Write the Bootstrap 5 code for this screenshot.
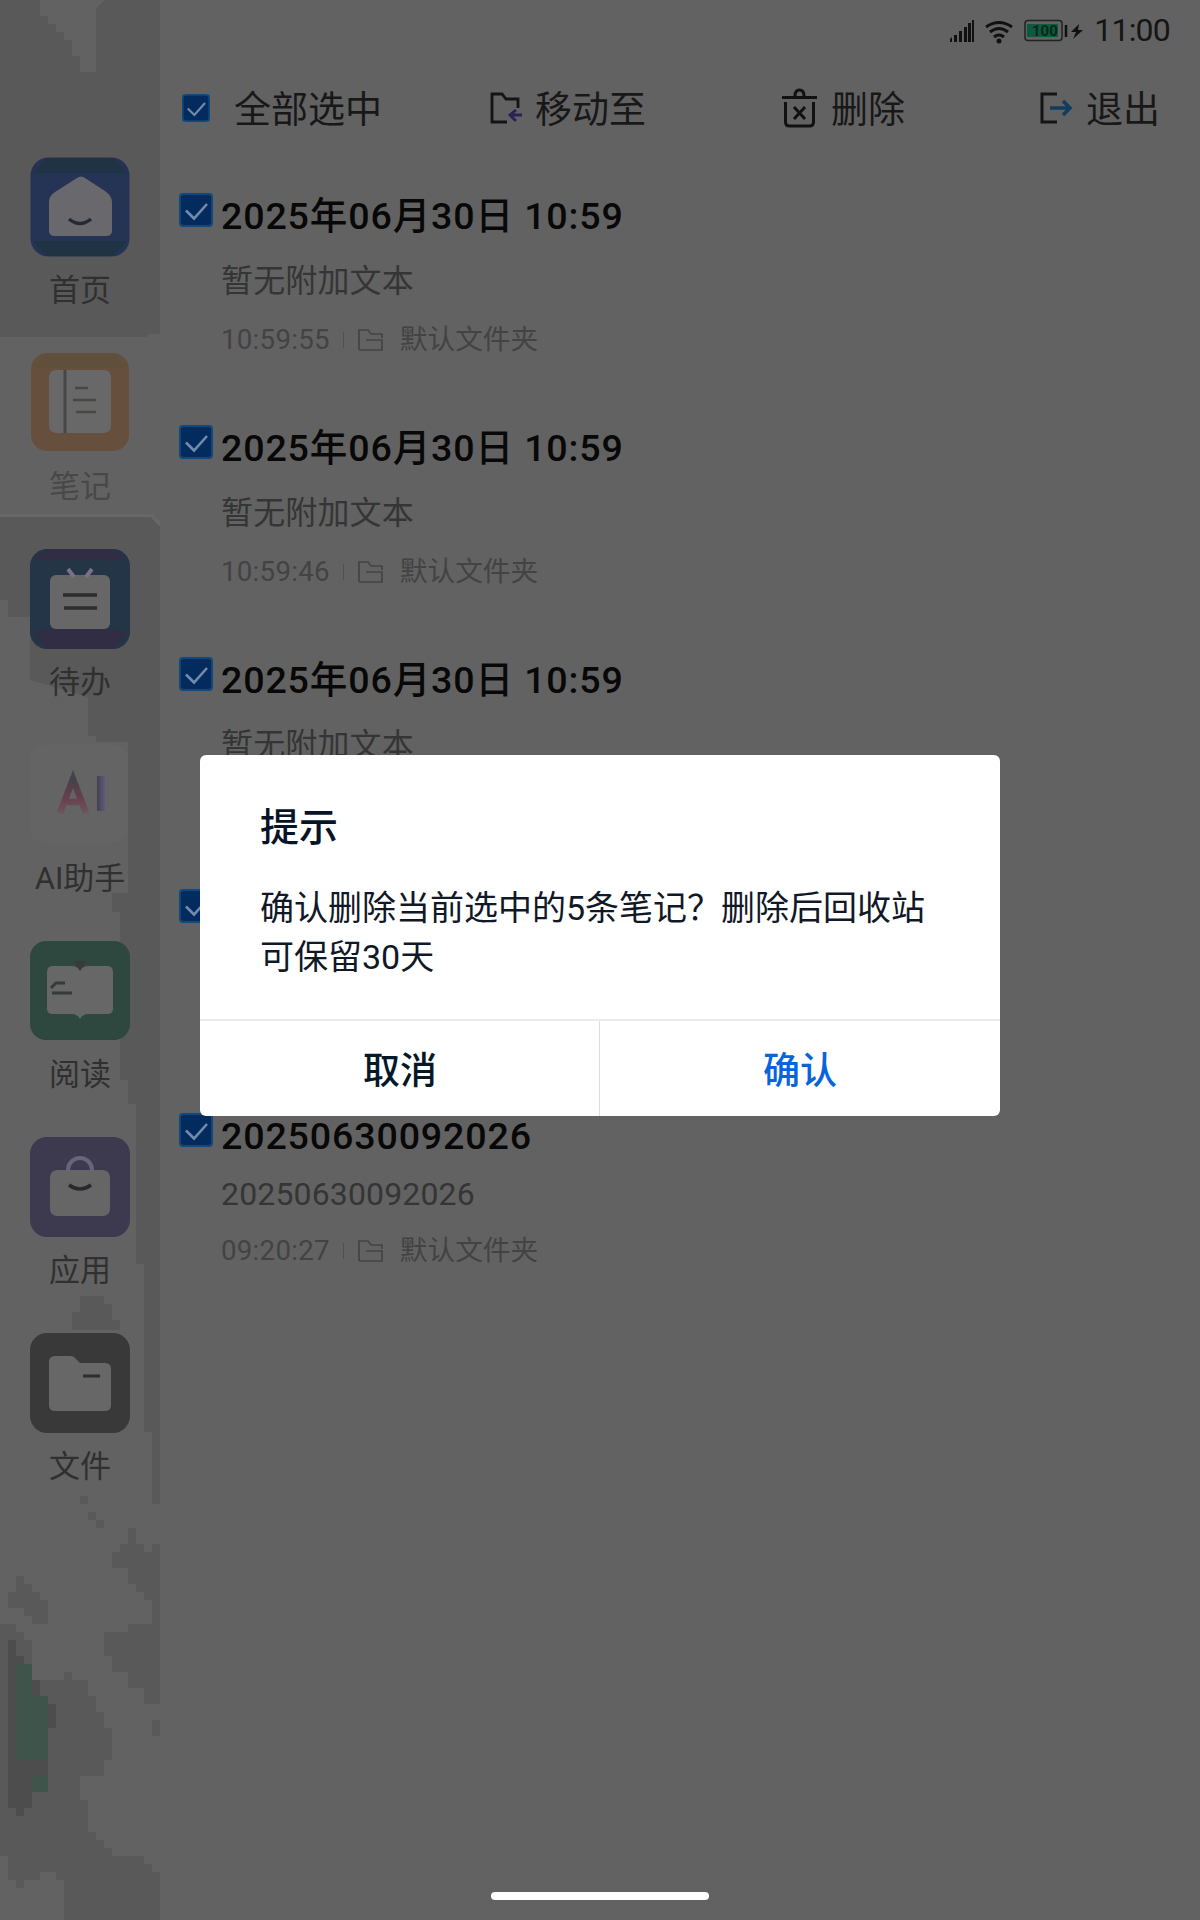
<!DOCTYPE html>
<html lang="zh-CN">
<head>
<meta charset="utf-8">
<meta name="viewport" content="width=device-width, initial-scale=1">
<title>笔记</title>
<link href="https://cdn.jsdelivr.net/npm/bootstrap@5.3.0/dist/css/bootstrap.min.css" rel="stylesheet">
<style>
body{background:#626262;font-family:Roboto,"Noto Sans CJK SC",sans-serif;color:#151515;width:1200px;height:1920px;overflow:hidden}
svg{display:block;flex:none}
.screen{width:1200px;height:1920px}
.side{width:160px;padding-top:157px;flex:none}
.side-bg{left:0;top:0;z-index:0}
.side-item{height:196px;z-index:1;font-size:31px;line-height:46px;color:#303030}
.side-item svg{margin-bottom:11px}
.side-item.current{color:#484848}
.status{height:60px;padding:0 30px 0 0;font-size:32px}
.status-icons{margin-right:10px}
.clock{letter-spacing:-.8px}
.tools{height:96px;font-size:37px;line-height:54px;color:#181818}
.tools .tool{flex:none}
.tools .tool span{padding-top:6px}
.tool-all{width:330px;padding-left:22px}
.tool-move{width:291px}
.tool-del{width:258px}
.gap-ic{margin-right:13px}
.note{height:232px;padding:33px 0 0 19px}
.notes{padding-top:4px}
.note.plain{height:224px}
.note-title{font-size:37.6px;font-weight:500;line-height:46px;color:#080808;letter-spacing:.85px;white-space:nowrap}
.note-sub{font-size:32px;line-height:44px;color:#353535;margin-top:20px;letter-spacing:.15px}
.note-meta{font-size:27.7px;line-height:38px;color:#434343;margin-top:18px}
.stamp{letter-spacing:.25px}
.note.plain .note-sub{margin-top:13px}
.note.plain .note-meta{margin-top:16px}
.note-text{margin-left:8px}
.bar{width:1px;height:16px;background:#505050;margin:0 14px 0 13px}
.layer{inset:0;padding-top:755px;z-index:5}
.dialog{width:800px;height:361px;border-radius:6px;background:#fff}
.dialog-main{height:266px;padding:46px 60px 0;border-bottom:2px solid #ebebeb}
.dialog-main h2{font-size:39px;line-height:54px;font-weight:500;color:#071326;margin:0 0 29px}
.dialog-main p{font-size:34px;line-height:49px;color:#111827;margin:0;width:690px;white-space:nowrap}
.act{font-size:37px;font-weight:500;color:#051827;border:0;background:none;padding:6px 0 0}
.act+.act{box-shadow:-1px 0 #dedede;color:#0864dc}
.home{width:218px;height:8px;border-radius:4px;background:#fff;left:491px;top:1892px}
</style>
</head>
<body>
<svg width="0" height="0" class="position-absolute">
<defs>
<symbol id="chk" viewBox="0 0 34 34"><rect width="34" height="34" rx="4" fill="#11497c"/><rect x="2" y="2" width="30" height="30" rx="3" fill="#032b5e"/><path d="M7 17.500l8 8L28 11" fill="none" stroke="#738bab" stroke-width="2.600"/></symbol>
<symbol id="fold" viewBox="0 0 26 24"><path d="M1 22V2h9l3 4h11v4M1 22h23v-6M8 12h16v4" fill="none" stroke="#444" stroke-width="1.700"/></symbol>
</defs>
</svg>
<div class="screen d-flex position-relative">
  <aside class="side position-relative">
    <svg class="side-bg position-absolute" width="160" height="1920" shape-rendering="crispEdges">
      <path fill="#595959" d="M0 0H160V334H150L146 337H0ZM0 517H152L160 526V1504H152V1432H144V1264H136V1104H128V1080H120V912H112V893H128V742H96V736H88V697L30 680V617H8V600H0Z"/>
      <path fill="#626262" d="M40 0H104L96 8V72H80V56H72V40H64V32H56V24H48V16H40Z"/>
      <path fill="#595959" d="M80 1296H104V1304H112V1320H120V1330H72V1312H80ZM80 1496h8v8h-8zM88 1512h8v8h-8zM96 1520h8v8h-8zM128 1528h8v16h8v8h8v-8h8V1624h-8v-24h-8v-8h-8v-8h-8v-16h-16v-16h8v-8h8zM16 1576h8v8h8v8h8v8h8v24H32v-8h-8v-8H8v-16h8zM128 1624h32v80h-16v-16h-16v-16h-16v-16h-8v-24h24zM152 1720h8v16h-8zM0 1624H16v8h8v8h8v40H64v-8h8v8h16v16h8v16h8v16h8v32h-8v16H80v24h8v32h8v8h8v8h8v8h32v8h8v8h8v48H64v-40H56v-8H40v8H24v8H16v-8H8v-24H0Z"/>
      <path fill="#4d4d4d" d="M8 1640h8v16h8v24h16v16h8v8h8v24h-8v48h-8v8h-8v24h-8v8h-8v-8H8z"/>
      <path fill="#3f554c" d="M16 1664h16v32h16v64H16zM32 1776h16v16H32z"/>
      <path fill="#676767" d="M0 514h152l8 8v5l-10-10H0z"/>
    </svg>
    <div class="side-item d-flex flex-column align-items-center position-relative">
      <svg width="100" height="100"><rect x=".5" y=".5" width="99" height="99" rx="18" fill="#253354"/><path d="M17 1h66l14 15H3zM3 84h94l-14 15H17z" fill="#203344"/><path d="M47 21q4-3 8 0l20 13q7 5 7 11v29q0 5-6 5H25q-6 0-6-5V45q0-6 6-10z" fill="#69686c"/><path d="M39 62q11 9 22 0" fill="none" stroke="#252b35" stroke-width="3.500"/></svg>首页</div>
    <div class="side-item current d-flex flex-column align-items-center position-relative">
      <svg width="100" height="100"><rect x="1" y="0" width="98" height="98" rx="16" fill="#66503d"/><path d="M17 0h66l15 15H2z" fill="#5f4f3b"/><rect x="19" y="17" width="62" height="63" rx="7" fill="#686868"/><path d="M35 17v63" stroke="#494744" stroke-width="3"/><path d="M45 35h13M43 47h23M46 59h20" stroke="#494744" stroke-width="2.500"/></svg>笔记</div>
    <div class="side-item d-flex flex-column align-items-center position-relative">
      <svg width="100" height="100"><rect width="100" height="100" rx="17" fill="#233547"/><path d="M17 0h66l14 11H3zM17 80h66l14 4-14 16H17l-14-16z" fill="#302d45"/><rect x="20" y="26" width="60" height="54" rx="6" fill="#676767"/><path d="M38 20l6 8M62 20l-6 8" stroke="#777189" stroke-width="4"/><path d="M33 46h34M34 59h33" stroke="#2d2d2d" stroke-width="3.500"/></svg>待办</div>
    <div class="side-item d-flex flex-column align-items-center position-relative">
      <svg width="100" height="100"><defs><linearGradient id="ga" x1="0" y1="0" x2="0" y2="1"><stop stop-color="#444248"/><stop offset=".5" stop-color="#663e4a"/><stop offset="1" stop-color="#6b5560"/></linearGradient><linearGradient id="gb" x1="0" x2="1"><stop stop-color="#41414d"/><stop offset="1" stop-color="#625a7d"/></linearGradient></defs><rect width="98" height="98" rx="14" fill="#646464"/><path d="M30 68L43 34 56 68M34 57h18" fill="none" stroke="url(#ga)" stroke-width="6.500"/><path d="M67 31h8v35h-8z" fill="url(#gb)"/></svg>AI助手</div>
    <div class="side-item d-flex flex-column align-items-center position-relative">
      <svg width="100" height="100"><rect width="100" height="99" rx="16" fill="#2e4840"/><path d="M23 25H42q5 0 8 5 3-5 8-5H77q6 0 6 6V68q0 5-6 5H58q-5 0-8 5-3-5-8-5H23q-6 0-6-5V31q0-6 6-6z" fill="#676767"/><path d="M43 20h14l-7 9z" fill="#393b3a"/><path d="M21 47l5-5h9M22 52h20" fill="none" stroke="#343b38" stroke-width="3"/></svg>阅读</div>
    <div class="side-item d-flex flex-column align-items-center position-relative">
      <svg width="100" height="100"><rect width="100" height="100" rx="17" fill="#3d394f"/><rect x="20" y="33" width="60" height="46" rx="7" fill="#666"/><path d="M38 35v-2a12 12 0 0124 0v2" fill="none" stroke="#69647a" stroke-width="4"/><path d="M39 48q11 8 22 0" fill="none" stroke="#29282c" stroke-width="3.500"/></svg>应用</div>
    <div class="side-item d-flex flex-column align-items-center position-relative">
      <svg width="100" height="100"><rect width="100" height="100" rx="17" fill="#393939"/><path d="M25 23H40q4 0 6 3l4 4H75q6 0 6 6V72q0 6-6 6H25q-6 0-6-6V29q0-6 6-6z" fill="#676767"/><path d="M53 43h17" stroke="#2d2d2d" stroke-width="3"/></svg>文件</div>
  </aside>
  <main class="flex-grow-1">
    <div class="status d-flex justify-content-end align-items-center">
      <svg width="134" height="30" class="status-icons"><path d="M0 24l2-2v5H0zM4 20h3v7H4zM9 16h3v11H9zM14 12h3v15h-3zM18 8h3v19h-3zM22 5h2v22h-2z" fill="#111"/><g fill="none" stroke="#111" stroke-width="3"><path d="M36 12q13-9 26 0M40 17q9-7 18 0M44 22q5-4 10 0"/></g><circle cx="49" cy="26" r="2.500" fill="#111"/><rect x="75" y="5.500" width="37" height="20" rx="3" fill="#626262" stroke="#222" stroke-width="1.500"/><rect x="77" y="9" width="31" height="13" fill="#0d5a40"/><text x="82" y="21" font-size="15" font-weight="700" fill="#082719">100</text><path d="M116 10v12" stroke="#111" stroke-width="2.500"/><path d="M129 9l-8 8h5l-3 7 10-9h-5z" fill="#111"/></svg>
      <span class="clock">11:00</span>
    </div>
    <div class="tools d-flex align-items-center">
      <div class="tool tool-all d-flex align-items-center"><svg width="28" height="28" class="me-4"><use href="#chk"/></svg><span>全部选中</span></div>
      <div class="tool tool-move d-flex align-items-center"><svg width="32" height="34" class="gap-ic"><path d="M17 31H2V3h10l4 5h12v9" fill="none" stroke="#141414" stroke-width="2.800"/><path d="M32 24H21m5-5-6 5 6 6" fill="none" stroke="#292253" stroke-width="2.800"/></svg><span>移动至</span></div>
      <div class="tool tool-del d-flex align-items-center"><svg width="37" height="42" class="gap-ic"><path d="M1 10.500h35M4.500 15v20q0 4 4 4h20q4 0 4-4V15M14 9q0-6 4.500-6T23 9M13 20l11 12m0-12L13 32" fill="none" stroke="#111" stroke-width="3"/></svg><span>删除</span></div>
      <div class="tool d-flex align-items-center"><svg width="34" height="34" class="gap-ic"><path d="M18 3H3v28h15" fill="none" stroke="#141414" stroke-width="3"/><path d="M11 17h20m-7-7 7 7-7 7" fill="none" stroke="#113c60" stroke-width="3.500"/></svg><span>退出</span></div>
    </div>
    <section class="notes">
      <div class="note d-flex align-items-start"><svg width="34" height="34"><use href="#chk"/></svg><div class="note-text"><div class="note-title">2025年06月30日 10:59</div><div class="note-sub">暂无附加文本</div><div class="note-meta d-flex align-items-center"><span class="stamp">10:59:55</span><i class="bar"></i><svg width="26" height="24" class="me-3"><use href="#fold"/></svg><span>默认文件夹</span></div></div></div>
      <div class="note d-flex align-items-start"><svg width="34" height="34"><use href="#chk"/></svg><div class="note-text"><div class="note-title">2025年06月30日 10:59</div><div class="note-sub">暂无附加文本</div><div class="note-meta d-flex align-items-center"><span class="stamp">10:59:46</span><i class="bar"></i><svg width="26" height="24" class="me-3"><use href="#fold"/></svg><span>默认文件夹</span></div></div></div>
      <div class="note d-flex align-items-start"><svg width="34" height="34"><use href="#chk"/></svg><div class="note-text"><div class="note-title">2025年06月30日 10:59</div><div class="note-sub">暂无附加文本</div></div></div>
      <div class="note plain d-flex align-items-start"><svg width="34" height="34"><use href="#chk"/></svg></div>
      <div class="note plain d-flex align-items-start"><svg width="34" height="34"><use href="#chk"/></svg><div class="note-text"><div class="note-title">20250630092026</div><div class="note-sub">20250630092026</div><div class="note-meta d-flex align-items-center"><span class="stamp">09:20:27</span><i class="bar"></i><svg width="26" height="24" class="me-3"><use href="#fold"/></svg><span>默认文件夹</span></div></div></div>
    </section>
  </main>
  <div class="layer position-absolute d-flex justify-content-center align-items-start">
    <div class="dialog d-flex flex-column" role="dialog">
      <div class="dialog-main"><h2>提示</h2><p>确认删除当前选中的5条笔记？删除后回收站<br>可保留30天</p></div>
      <div class="d-flex flex-grow-1"><button class="act w-50">取消</button><button class="act w-50">确认</button></div>
    </div>
  </div>
  <div class="home position-absolute"></div>
</div>
<script src="https://cdn.jsdelivr.net/npm/bootstrap@5.3.0/dist/js/bootstrap.bundle.min.js"></script>
</body>
</html>
